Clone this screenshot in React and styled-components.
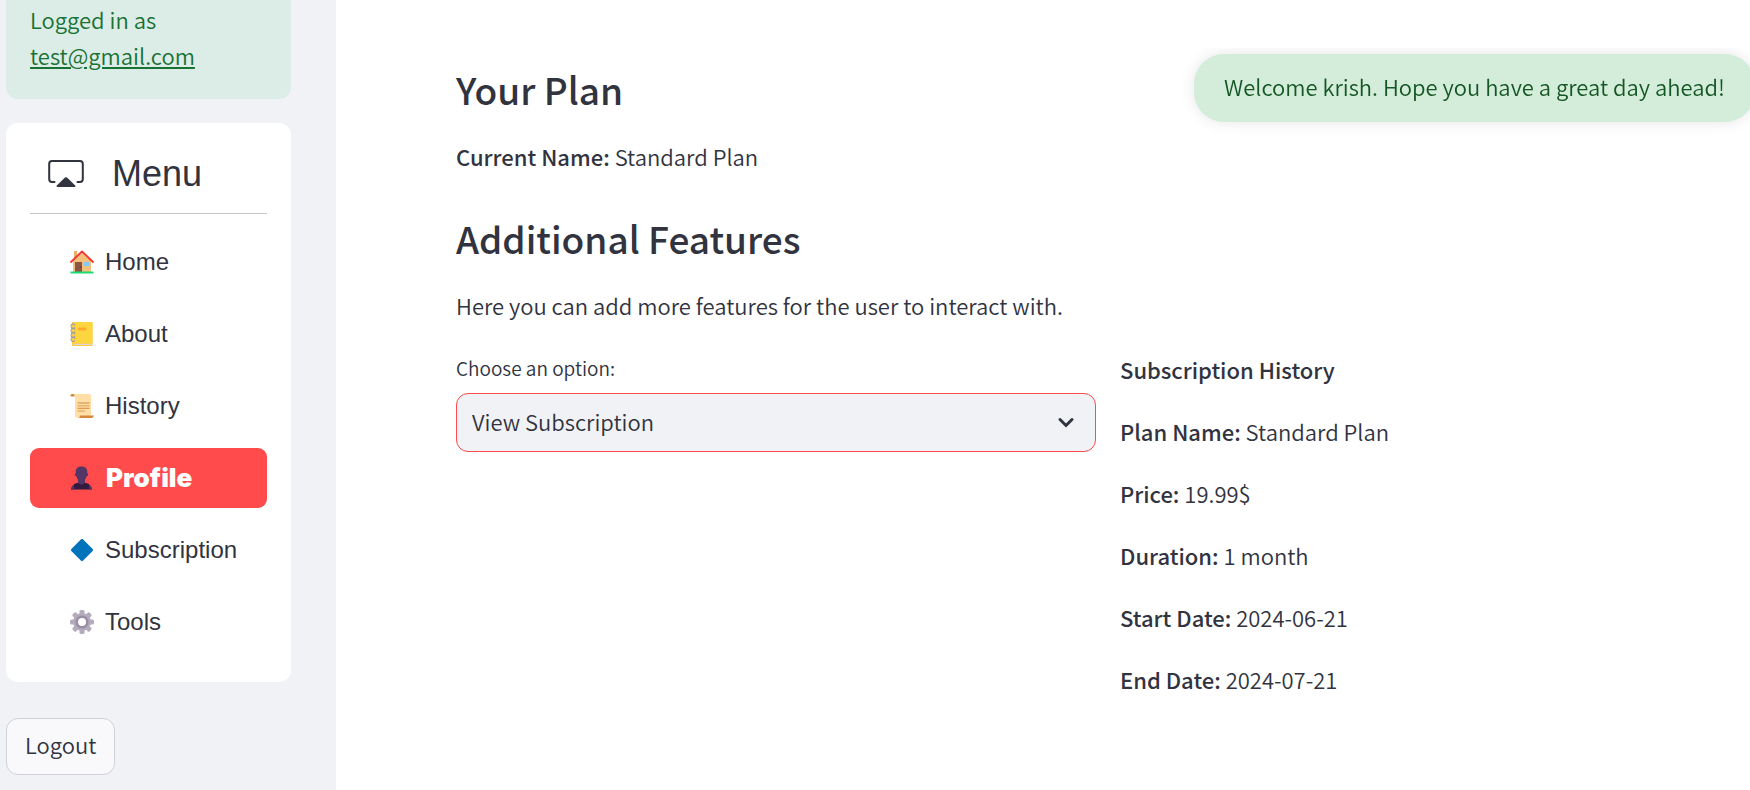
import React from "react";
import styled, { createGlobalStyle, css } from "styled-components";

const sourceSans = `"Source Sans Pro", "Noto Sans CJK JP", "Noto Sans", sans-serif`;
const arial = `"Liberation Sans", Arial, sans-serif`;

const GlobalStyle = createGlobalStyle`
  *, *::before, *::after { box-sizing: border-box; }
  body {
    margin: 0;
    background: #ffffff;
    color: #31333f;
    font-family: ${sourceSans};
    font-size: 22px;
    font-weight: 350;
    line-height: 36px;
  }
`;

const Page = styled.div`
  display: flex;
  min-height: 100vh;
`;

const Sidebar = styled.aside`
  flex: 0 0 336px;
  padding: 0 45px 15px 6px;
  background: #f0f2f6;
`;

const LoginNotice = styled.div`
  padding: 1px 24px 26px;
  border-radius: 0 0 12px 12px;
  background: #dcece6;
  color: #177233;
`;

const MailLink = styled.a`
  display: block;
  color: inherit;
  text-decoration: underline;
`;

const MenuCard = styled.nav`
  margin: 24px 0 36px;
  padding: 24px 24px 30px;
  border-radius: 12px;
  background: #ffffff;
  font-family: ${arial};
`;

const MenuTitle = styled.h2`
  display: flex;
  align-items: center;
  gap: 28px;
  margin: 0;
  padding: 0 18px 13px;
  border-bottom: 1px solid #c4c5c8;
  font-size: 36px;
  font-weight: 400;
  line-height: 53px;
`;

const MenuList = styled.ul`
  display: flex;
  flex-direction: column;
  gap: 12px;
  margin: 18px 0 0;
  padding: 0;
  list-style: none;
`;

const MenuLink = styled.a`
  display: flex;
  align-items: center;
  gap: 11px;
  height: 60px;
  padding: 0 0 0 40px;
  border-radius: 9px;
  color: #31333f;
  font-size: 24px;
  text-decoration: none;

  ${({ $active }) =>
    $active &&
    css`
      gap: 12px;
      background: #ff4b4b;
      color: #ffffff;
      font-family: Inter, ${arial};
      font-size: 26px;
      font-weight: 900;
    `}
`;

const LogoutButton = styled.button`
  height: 57px;
  padding: 0 18px 5px;
  border: 1px solid #d0d1d6;
  border-radius: 12px;
  background: #f9f9fc;
  color: inherit;
  font: inherit;
  cursor: pointer;
`;

const Main = styled.main`
  flex: 1;
  min-width: 0;
  padding: 64px 0 72px 120px;
`;

const Heading = styled.h2`
  margin: 0;
  font-size: 37px;
  font-weight: 500;
  line-height: 50px;
`;

const Text = styled.p`
  margin: 0;
  line-height: 38px;
`;

const Strong = styled.strong`
  font-weight: 500;
`;

const Section = styled.section`
  display: flex;
  flex-direction: column;
  gap: 23px;
  margin-bottom: 38px;

  &:last-of-type {
    margin-bottom: 26px;
  }
`;

const Columns = styled.div`
  display: grid;
  grid-template-columns: minmax(0, 64fr) minmax(0, 63fr);
  gap: 24px;
`;

const FieldLabel = styled.label`
  display: block;
  margin-bottom: 7px;
  font-size: 19px;
  line-height: 36px;
`;

const SelectBox = styled.div`
  position: relative;
`;

const Select = styled.select`
  display: block;
  width: 100%;
  height: 59px;
  padding: 0 60px 3px 15px;
  border: 1px solid #ff4b4b;
  border-radius: 12px;
  outline: none;
  appearance: none;
  background: #f0f2f6;
  color: inherit;
  font: inherit;
`;

const Chevron = styled.svg`
  position: absolute;
  top: 17px;
  right: 18px;
  pointer-events: none;
`;

const Details = styled.div`
  display: flex;
  flex-direction: column;
  gap: 24px;
`;

const Toast = styled.div`
  position: fixed;
  top: 54px;
  right: -5px;
  padding: 14px 30px 18px;
  border-radius: 30px;
  background: #d4edda;
  box-shadow: 0 0 15px rgba(0, 0, 0, 0.1);
  clip-path: inset(-6px -24px -24px -24px);
  color: #155724;
`;

const icons = {
  home: (
    <>
      <path d="M4 1h3v7H4z" fill="#e8b06b" />
      <path d="M12 2 3 11v11h18V11z" fill="#f3c07b" />
      <path d="M1 12 12 1.400 23 12" fill="none" stroke="#f8312f" strokeWidth="1.800" strokeLinecap="round" strokeLinejoin="round" />
      <path d="M5 12h7v10H5z" fill="#8c5543" />
      <circle cx="10.800" cy="17" r="0.600" fill="#4b2a24" />
      <path d="M14 12h5v4h-5z" fill="#83cbff" />
      <path d="M0.500 21.500h23v2h-23z" fill="#17dd72" />
    </>
  ),
  notebook: (
    <>
      <rect x="2" y="0" width="20.500" height="24" rx="1" fill="#ffc83d" />
      <rect x="3" y="0" width="19.500" height="21.500" rx="1" fill="#fdd63f" />
      <path d="M4 21.800h18v1.200H4z" fill="#d8d8d8" />
      <rect x="8" y="5.500" width="8.500" height="3" rx="1" fill="#ffaa2b" />
      <path d="M5 3.500C5 1 1 1.500 1 4s3 3 4 1M5 8c0-2.500-4-2-4 .5s3 3 4 1M5 12.500c0-2.500-4-2-4 .5s3 3 4 1M5 17c0-2.500-4-2-4 .5s3 2.500 4 1" fill="none" stroke="#9b9b9b" strokeWidth="1.100" />
    </>
  ),
  scroll: (
    <>
      <path d="M3 0h15.500Q21 0 21 2.500V22H7Q5 22 5 20V3z" fill="#ffdea7" />
      <path d="M2 0h1.500Q5 .500 4.500 2.500H1.500Q0 2.500.500 1Q1 0 2 0z" fill="#d3883e" />
      <path d="M5 18v3.500Q5 24 8 24h12v-3H5z" fill="#ffdea7" />
      <path d="M10 21.500h14Q23.500 24 21 24H8.500Q10 23.500 10 21.500z" fill="#d3883e" />
      <path d="M7.500 9h12M7.500 14.300h12" stroke="#d3883e" strokeWidth="1.100" />
      <path d="M7.500 11.700h12M7.500 17h7.500" stroke="#e8b26c" strokeWidth="1.400" />
    </>
  ),
  person: (
    <>
      <path d="M1 23.500Q2 18 7 17l4-1 5 1Q21 18 22 23.500z" fill="#321b41" />
      <path d="M1 23.500Q1.500 20.500 4 18.500v5zM22 23.500Q21.500 20.500 19 18.500v5z" fill="#533566" />
      <path d="M8 13h7v3q-1 2.500-3.500 2.500T8 16z" fill="#533566" />
      <path d="M5.800 5.500C5.800 2 8 .500 11.500.500s5.700 1.500 5.700 5v1.700q1.300 0 1 1.500t-1.500 1.500C16 13 14 15 11.500 15s-4.500-2-5.200-4.800Q5 10 4.800 8.700t1-1.500z" fill="#533566" />
    </>
  ),
  diamond: <rect x="3.800" y="3.800" width="16.400" height="16.400" rx="1.300" transform="rotate(45 12 12)" fill="#0074ba" />,
  gear: (
    <>
      <g fill="#b4acbc">
        {[0, 45, 90, 135].map((angle) => (
          <rect key={angle} x="9.500" y="0" width="5" height="24" rx="1.500" transform={`rotate(${angle} 12 12)`} />
        ))}
        <circle cx="12" cy="12" r="9" />
      </g>
      <circle cx="12" cy="12" r="5.300" fill="#ffffff" stroke="#998ea4" strokeWidth="2.600" />
    </>
  ),
};

const menuItems = [
  { label: "Home", icon: "home" },
  { label: "About", icon: "notebook" },
  { label: "History", icon: "scroll" },
  { label: "Profile", icon: "person", active: true },
  { label: "Subscription", icon: "diamond" },
  { label: "Tools", icon: "gear" },
];

const subscription = [
  ["Plan Name:", "Standard Plan"],
  ["Price:", "19.99$"],
  ["Duration:", "1 month"],
  ["Start Date:", "2024-06-21"],
  ["End Date:", "2024-07-21"],
];

export default function App() {
  return (
    <>
      <GlobalStyle />
      <Page>
        <Sidebar>
          <LoginNotice>
            Logged in as
            <MailLink href="mailto:test@gmail.com">test@gmail.com</MailLink>
          </LoginNotice>
          <MenuCard>
            <MenuTitle>
              <svg width="36" height="36" viewBox="0 0 36 36" fill="none" aria-hidden="true">
                <path d="M6.500 26H4Q1.200 26 1.200 23V8Q1.200 5 4 5H32Q34.800 5 34.800 8V23Q34.800 26 32 26H29.500" stroke="#31333f" strokeWidth="2" strokeLinecap="round" />
                <path d="M17 21.600Q18 20.700 19 21.600L27.200 29.500Q28 31 26.500 31H9.500Q8 31 8.800 29.500z" fill="#31333f" />
              </svg>
              Menu
            </MenuTitle>
            <MenuList>
              {menuItems.map(({ label, icon, active }) => (
                <li key={label}>
                  <MenuLink href={`#${label.toLowerCase()}`} $active={active} aria-current={active ? "page" : undefined}>
                    <svg width="24" height="24" viewBox="0 0 24 24" aria-hidden="true">
                      {icons[icon]}
                    </svg>
                    {label}
                  </MenuLink>
                </li>
              ))}
            </MenuList>
          </MenuCard>
          <LogoutButton type="button">Logout</LogoutButton>
        </Sidebar>
        <Main>
          <Section>
            <Heading>Your Plan</Heading>
            <Text>
              <Strong>Current Name:</Strong> Standard Plan
            </Text>
          </Section>
          <Section>
            <Heading>Additional Features</Heading>
            <Text>Here you can add more features for the user to interact with.</Text>
          </Section>
          <Columns>
            <div>
              <FieldLabel htmlFor="option">Choose an option:</FieldLabel>
              <SelectBox>
                <Select id="option" defaultValue="view">
                  <option value="view">View Subscription</option>
                </Select>
                <Chevron width="24" height="24" viewBox="0 0 24 24" fill="none" aria-hidden="true">
                  <path d="M6 9.500 12 15.500 18 9.500" stroke="#31333f" strokeWidth="3" strokeLinecap="round" />
                </Chevron>
              </SelectBox>
            </div>
            <Details>
              <Text>
                <Strong>Subscription History</Strong>
              </Text>
              {subscription.map(([name, value]) => (
                <Text key={name}>
                  <Strong>{name}</Strong> {value}
                </Text>
              ))}
            </Details>
          </Columns>
        </Main>
      </Page>
      <Toast role="status">Welcome krish. Hope you have a great day ahead!</Toast>
    </>
  );
}
